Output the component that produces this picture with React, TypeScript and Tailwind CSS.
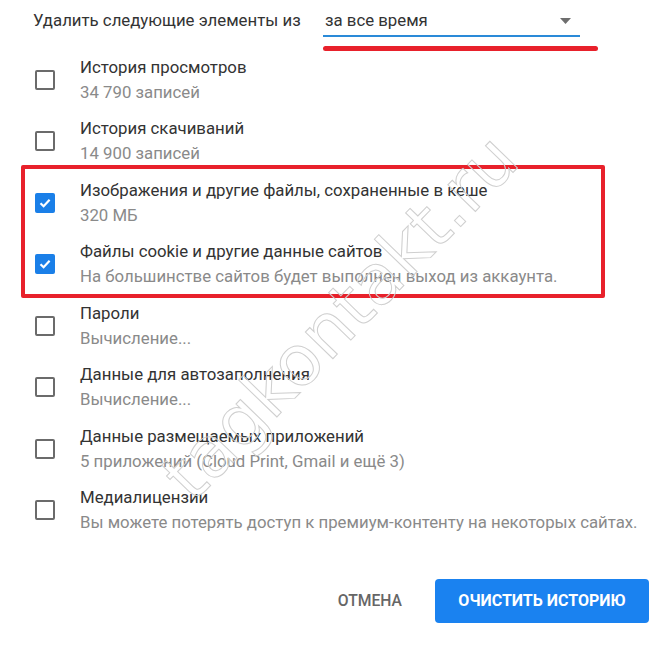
import React from 'react';

type Item = { title: string; sub: string; checked?: boolean };

const items: Item[] = [
  { title: 'История просмотров', sub: '34 790 записей' },
  { title: 'История скачиваний', sub: '14 900 записей' },
  { title: 'Изображения и другие файлы, сохраненные в кеше', sub: '320 МБ', checked: true },
  { title: 'Файлы cookie и другие данные сайтов', sub: 'На большинстве сайтов будет выполнен выход из аккаунта.', checked: true },
  { title: 'Пароли', sub: 'Вычисление...' },
  { title: 'Данные для автозаполнения', sub: 'Вычисление...' },
  { title: 'Данные размещаемых приложений', sub: '5 приложений (Cloud Print, Gmail и ещё 3)' },
  { title: 'Медиалицензии', sub: 'Вы можете потерять доступ к премиум-контенту на некоторых сайтах.' },
];

const Checkbox = ({ checked }: { checked?: boolean }) =>
  checked ? (
    <div className="w-[20px] h-[20px] rounded-[2px] bg-[#1a7fe8] flex items-center justify-center">
      <svg width="14" height="14" viewBox="0 0 14 14">
        <path d="M2.5 7.2 L5.6 10.2 L11.6 3.8" fill="none" stroke="#fff" strokeWidth="2.2" />
      </svg>
    </div>
  ) : (
    <div className="w-[20px] h-[20px] rounded-[2px] border-2 border-[#6b6b6b]" />
  );

const Row = ({ item }: { item: Item }) => (
  <div className="h-[61.5px] flex">
    <div className="w-[80px] pl-[35px] pt-[15px]">
      <Checkbox checked={item.checked} />
    </div>
    <div className="whitespace-nowrap">
      <div className="text-[16.8px] leading-[25px] text-[#333]">{item.title}</div>
      <div className="text-[16.8px] leading-[25px] text-[#8a8a8a]">{item.sub}</div>
    </div>
  </div>
);

export default function App() {
  return (
    <div className="relative w-[671px] h-[652px] bg-white overflow-hidden font-['Roboto',sans-serif]">
      {/* header */}
      <div className="flex items-start pt-[8px] pl-[33px]">
        <div className="text-[16.8px] leading-[24px] text-[#333] w-[290px] whitespace-nowrap">Удалить следующие элементы из</div>
        <div className="flex flex-col">
          <div className="w-[257px] h-[29px] border-b-2 border-[#2a8ad8] flex items-start justify-between pl-[2px] pr-[9px]">
            <span className="text-[16.8px] leading-[24px] text-[#333]">за все время</span>
            <svg width="11" height="6" viewBox="0 0 11 6" className="mt-[10px]">
              <path d="M0 0 L11 0 L5.5 6 Z" fill="#6e6e6e" />
            </svg>
          </div>
          <div className="w-[275px] h-[5px] mt-[9px] rounded-full bg-[#e8212b]" />
        </div>
      </div>

      {/* list */}
      <div className="mt-[3.5px]">
        {items.map((it) => (
          <Row key={it.title} item={it} />
        ))}
      </div>

      {/* buttons */}
      <div className="flex justify-end items-center gap-[33px] pr-[22px] mt-[32px]">
        <button className="text-[15.7px] font-medium text-[#666]">ОТМЕНА</button>
        <button className="w-[214px] h-[44px] rounded-[4px] bg-[#1a82f0] text-white text-[16px] font-bold">
          ОЧИСТИТЬ ИСТОРИЮ
        </button>
      </div>

      {/* annotation box */}
      <div className="absolute left-[21px] top-[165px] w-[584px] h-[133px] border-[4px] border-[#e8212b] rounded-[2px] pointer-events-none" />

      {/* watermark */}
      <div className="absolute left-[80px] top-[282px] w-[520px] text-center -rotate-[46deg] text-[70px] leading-none font-['DejaVu_Sans',sans-serif] text-transparent [-webkit-text-stroke:1px_#cfcfcf] pointer-events-none select-none">
        tagkontakt.ru
      </div>
    </div>
  );
}
